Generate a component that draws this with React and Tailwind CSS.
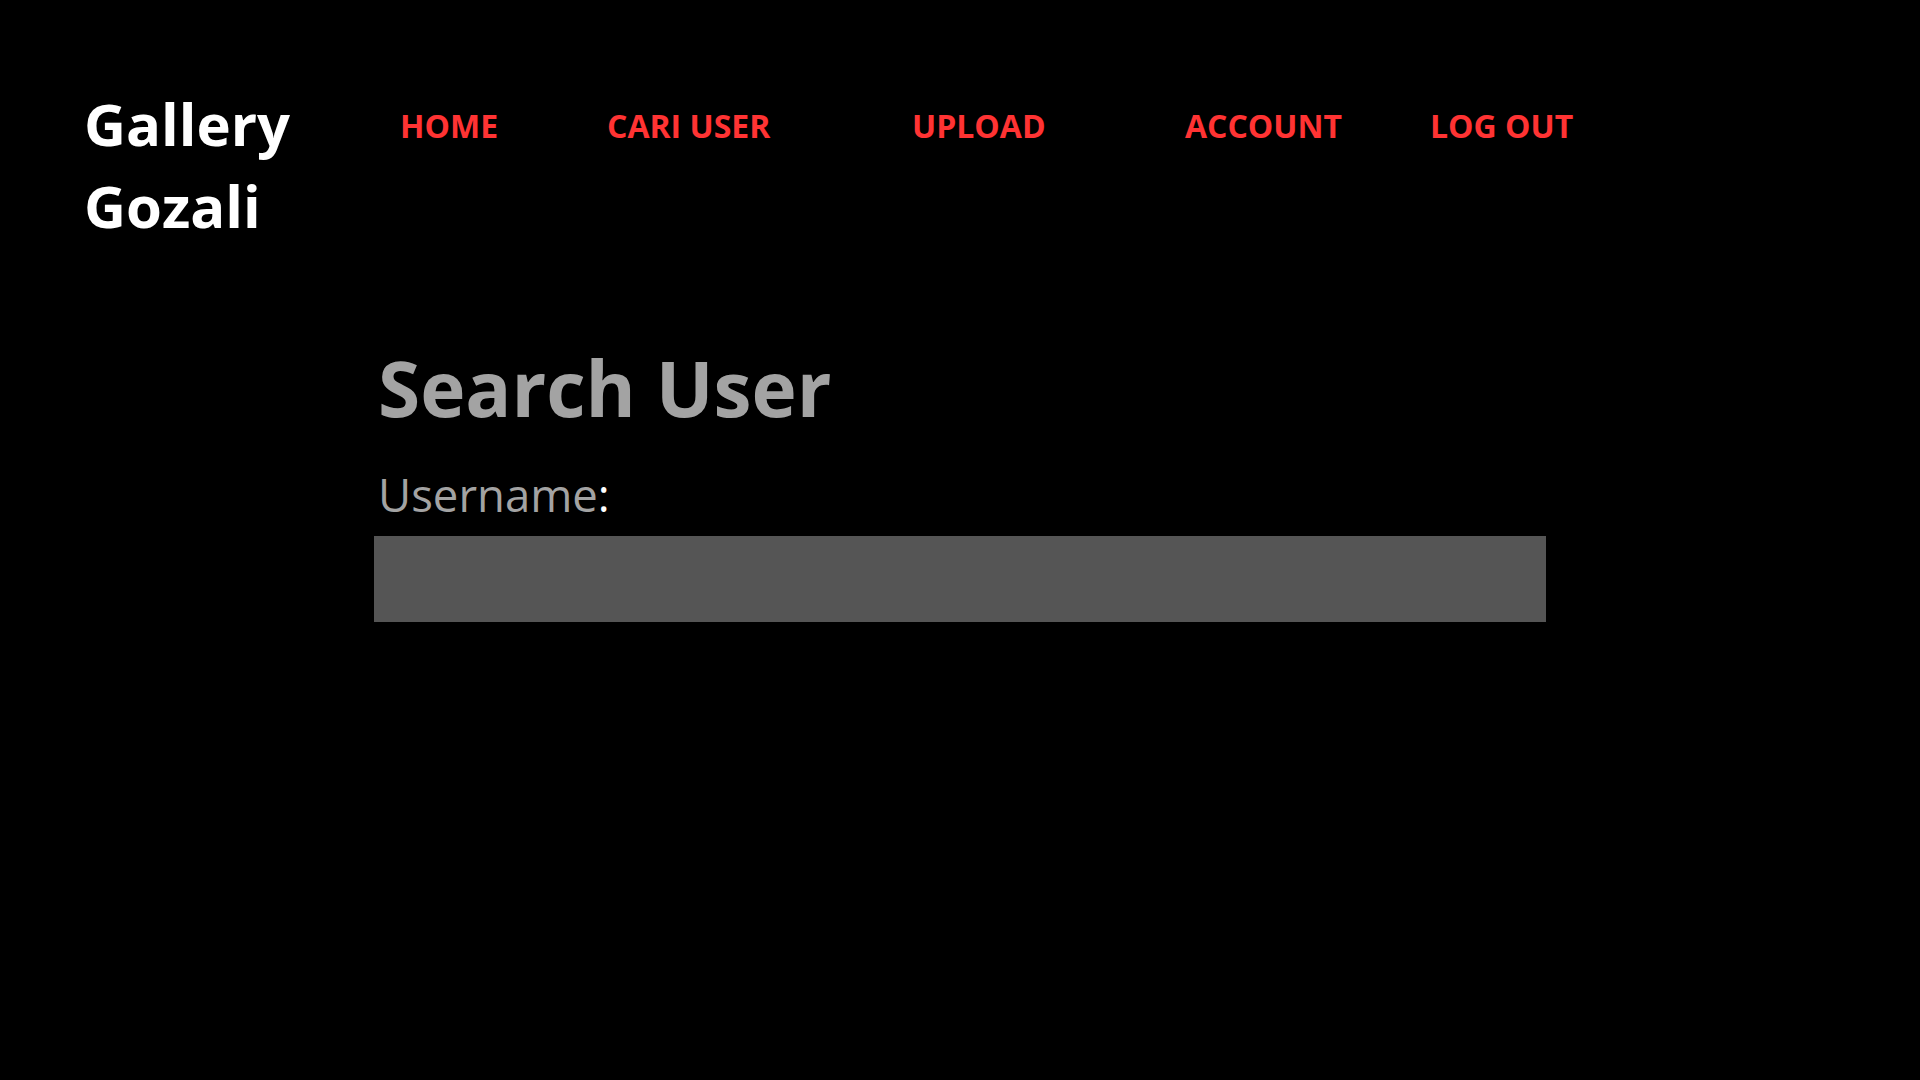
export default function App() {
  const nav = [
    { label: "HOME", w: "w-[207px]" },
    { label: "CARI USER", w: "w-[305px]" },
    { label: "UPLOAD", w: "w-[273px]" },
    { label: "ACCOUNT", w: "w-[245px]" },
    { label: "LOG OUT", w: "" },
  ];
  return (
    <div className="min-h-screen w-full bg-black" style={{ fontFamily: '"Open Sans", "Noto Sans", sans-serif' }}>
      <header className="flex items-start pt-[83px] pl-[84px]">
        <div className="w-[316px] text-[58px] font-bold leading-[82px] text-white">
          <div>Gallery</div>
          <div>Gozali</div>
        </div>
        <nav className="flex items-start pt-[19px]">
          {nav.map((n) => (
            <a key={n.label} href="#" className={`${n.w} text-[32px] font-bold text-[#ff3333] leading-normal`}>
              {n.label}
            </a>
          ))}
        </nav>
      </header>
      <main className="pl-[374px] pt-[87px]">
        <h1 className="pl-[4px] text-[76.5px] font-bold leading-[106px] text-[#a3a3a3]">Search User</h1>
        <label className="mt-[24px] block pl-[4px] text-[45.5px] leading-[60px] text-[#a3a3a3]">
          Username<span className="text-white">:</span>
        </label>
        <input type="text" className="mt-[12px] block h-[86px] w-[1172px] bg-[#555555] outline-none" />
      </main>
    </div>
  );
}
